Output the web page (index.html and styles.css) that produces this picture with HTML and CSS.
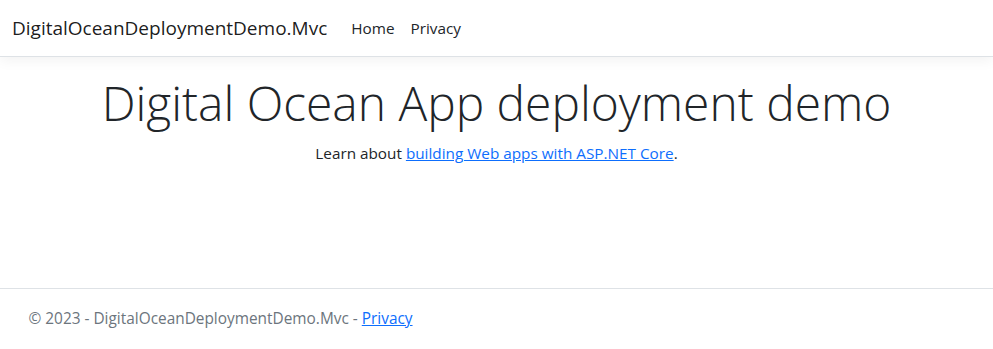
FILE: index.html
```html
<!DOCTYPE html>
<html lang="en">
<head>
<meta charset="utf-8">
<title>Home Page - DigitalOceanDeploymentDemo.Mvc</title>
<link rel="stylesheet" href="styles.css">
</head>
<body>
<header>
  <nav class="navbar">
    <a class="brand" href="#">DigitalOceanDeploymentDemo.Mvc</a>
    <ul class="nav">
      <li><a class="nav-link" href="#">Home</a></li>
      <li><a class="nav-link" href="#">Privacy</a></li>
    </ul>
  </nav>
</header>
<div class="container main">
  <main>
    <div class="text-center">
      <h1 class="display">Digital Ocean App deployment demo</h1>
      <p class="lead-p">Learn about <a href="#">building Web apps with ASP.NET Core</a>.</p>
    </div>
  </main>
</div>
<footer class="footer">
  <div class="container">&copy; 2023 - DigitalOceanDeploymentDemo.Mvc - <a href="#">Privacy</a></div>
</footer>
</body>
</html>
```
FILE: styles.css
```css
* { box-sizing: border-box; }
html, body { height: 100%; }
body {
  margin: 0;
  font-family: "Open Sans", "Noto Sans", sans-serif;
  font-size: 15.3px;
  line-height: 24px;
  color: #212529;
  background: #fff;
  display: flex;
  flex-direction: column;
}
a { color: #0d6efd; }
.navbar {
  display: flex;
  align-items: center;
  padding: 8px 12px;
  background: #fff;
  border-bottom: 1px solid #dee2e6;
  box-shadow: 0 4px 12px rgba(0,0,0,.05);
  margin-bottom: 16px;
}
.brand {
  font-size: 19px;
  line-height: 30px;
  padding: 5px 0;
  margin-right: 16px;
  color: rgba(0,0,0,.9);
  text-decoration: none;
  white-space: nowrap;
}
.nav { display: flex; list-style: none; margin: 0; padding: 0; }
.nav-link {
  display: block;
  padding: 8px 8px;
  color: #212529;
  text-decoration: none;
}
.container { width: 960px; margin: 0 auto; padding: 0 12px; }
.text-center { text-align: center; }
.display {
  font-size: 47.9px;
  font-weight: 300;
  line-height: 60px;
  margin: 0 0 8px;
}
.lead-p { margin: 0 0 16px; }
.footer {
  margin-top: auto;
  border-top: 1px solid #dee2e6;
  line-height: 60px;
  font-size: 15.4px;
  color: #6c757d;
  white-space: nowrap;
}
```
